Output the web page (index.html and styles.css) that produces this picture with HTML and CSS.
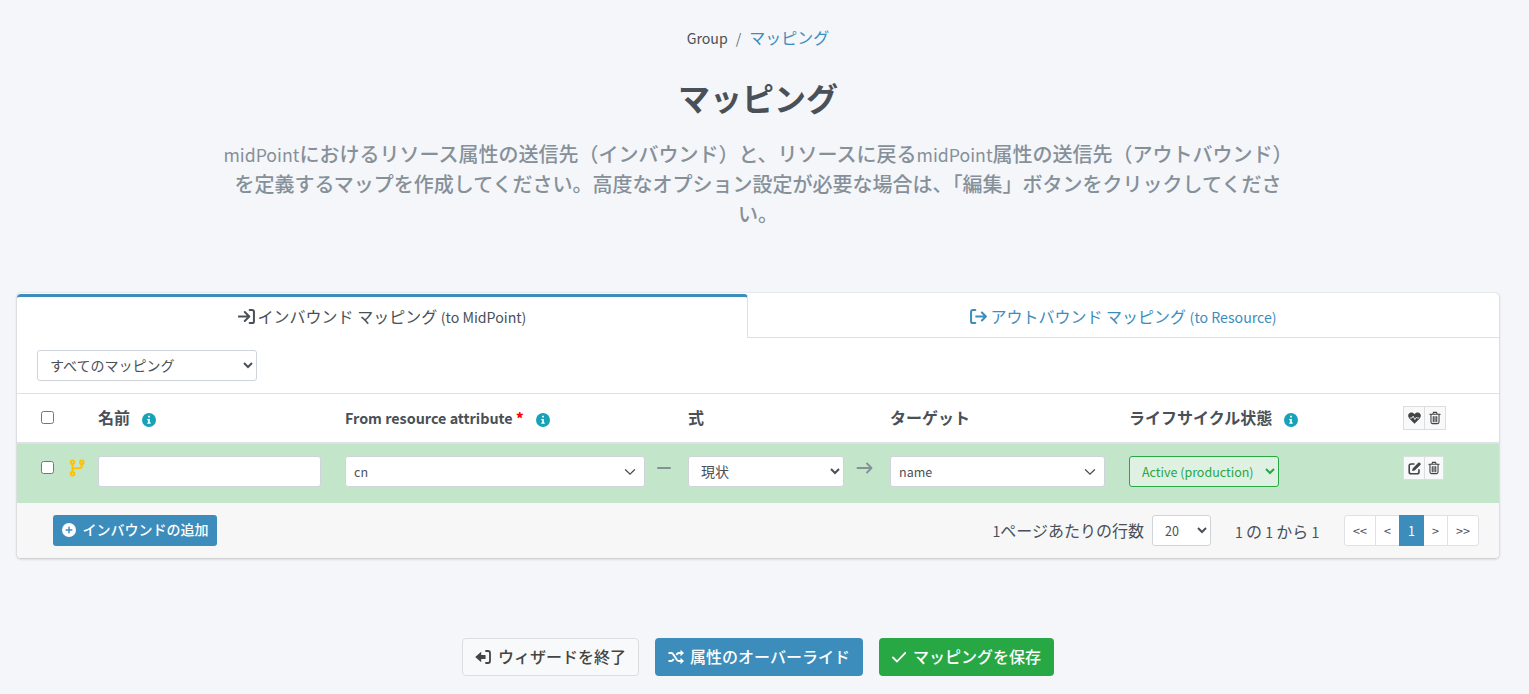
FILE: index.html
```html
<!DOCTYPE html>
<html lang="ja">
<head>
    <meta charset="utf-8">
    <title>マッピング</title>
    <link rel="stylesheet" href="styles.css">
</head>
<body>
    <!-- Icons -->
    <svg class="sprite">
        <symbol id="i-info" viewBox="0 0 16 16"><circle cx="8" cy="8" r="8" fill="currentColor"/><path d="M7 3.2h2v2H7zM6 6.8h3v4h1v1.4H6v-1.4h1V8.2H6z" fill="#fff"/></symbol>
        <symbol id="i-trash" viewBox="0 0 14 16"><path d="M1 3.7h12M4.4 3.5l.9-2h3.4l.9 2M2.3 4v8.8q0 1.8 1.7 1.8h6q1.7 0 1.7-1.8V4M5 6.3v6M7 6.3v6M9 6.3v6" fill="none" stroke="currentColor" stroke-width="1.3" stroke-linecap="round"/></symbol>
        <symbol id="i-down" viewBox="0 0 12 12"><path d="M1.5 3.7L6 8.2l4.500-4.500" fill="none" stroke="currentColor" stroke-width="1.3" stroke-linecap="round"/></symbol>
    </svg>

    <div class="breadcrumb"><span class="en">Group</span><span class="en slash">/</span><a>マッピング</a></div>
    <h1>マッピング</h1>
    <p class="description"><span class="en">midPoint</span>におけるリソース属性の送信先（インバウンド）と、リソースに戻る<span class="en">midPoint</span>属性の送信先（アウトバウンド）<br>を定義するマップを作成してください。高度なオプション設定が必要な場合は、「編集」ボタンをクリックしてくださ<br>い。</p>

    <div class="card">
        <div class="tabs">
            <div class="tab active">
                <svg class="tab-icon" viewBox="0 0 16 16"><path d="M.8 8h9.400M6.400 3.800L10.600 8l-4.200 4.200M11 1.800h2.200q1.800 0 1.800 1.800v8.800q0 1.800-1.800 1.800H11" fill="none" stroke="currentColor" stroke-width="1.900" stroke-linecap="round" stroke-linejoin="round"/></svg>
                <span>インバウンド マッピング <span class="en">(to MidPoint)</span></span>
            </div>
            <div class="tab">
                <svg class="tab-icon" viewBox="0 0 16 16"><path d="M5.800 8h9.200M11.200 4.200L15 8l-3.800 3.800M5 1.800H2.800Q1 1.800 1 3.600v8.800q0 1.800 1.800 1.800H5" fill="none" stroke="currentColor" stroke-width="1.900" stroke-linecap="round" stroke-linejoin="round"/></svg>
                <span>アウトバウンド マッピング <span class="en">(to Resource)</span></span>
            </div>
        </div>

        <div class="filter">
            <select class="control filter-select"><option>すべてのマッピング</option></select>
        </div>

        <table>
            <colgroup>
                <col class="c-check"><col class="c-icon"><col class="c-name"><col class="c-from"><col class="c-dash"><col class="c-expr"><col class="c-arrow"><col class="c-target"><col class="c-life"><col class="c-actions">
            </colgroup>
            <thead>
                <tr>
                    <th class="check"><input type="checkbox"></th>
                    <th></th>
                    <th>名前<svg class="info"><use href="#i-info"/></svg></th>
                    <th><span class="en">From resource attribute <b class="required">*</b></span><svg class="info"><use href="#i-info"/></svg></th>
                    <th></th>
                    <th>式</th>
                    <th></th>
                    <th>ターゲット</th>
                    <th>ライフサイクル状態<svg class="info"><use href="#i-info"/></svg></th>
                    <th class="actions-head">
                        <div class="actions">
                            <button class="first"><svg width="13" height="12" viewBox="0 0 16 14"><path d="M8 14L1.500 7.500C-.8 5 .2 1.500 2.600.6 4.800-.2 6.700.6 8 2.300 9.300.6 11.200-.2 13.400.6c2.400.9 3.400 4.400 1.100 6.900z" fill="currentColor"/><path d="M2 7h3l1.300-2.400 2.200 4.400L10.300 6l.8 1H14" fill="none" stroke="#f8f9fa" stroke-width="1"/></svg></button>
                            <button><svg width="12" height="14"><use href="#i-trash"/></svg></button>
                        </div>
                    </th>
                </tr>
            </thead>
            <tbody>
                <tr>
                    <td class="check"><input type="checkbox"></td>
                    <td class="icon-cell"><svg class="branch" viewBox="0 0 16 18"><g fill="none" stroke="currentColor" stroke-width="2"><circle cx="3.500" cy="3.300" r="1.800"/><circle cx="12.800" cy="3.300" r="1.800"/><circle cx="3.500" cy="14.700" r="1.800"/><path d="M3.500 5v8M12.800 5v1.500q0 2.700-2.700 2.700H3.500"/></g></svg></td>
                    <td><input type="text" class="control"></td>
                    <td><div class="control combo"><span>cn</span><svg width="12" height="12"><use href="#i-down"/></svg></div></td>
                    <td class="link"><svg width="14" height="16" viewBox="0 0 14 16"><path d="M1 8h12" stroke="currentColor" stroke-width="2" stroke-linecap="round"/></svg></td>
                    <td><select class="control"><option>現状</option></select></td>
                    <td class="link"><svg width="17" height="16" viewBox="0 0 17 16"><path d="M1.500 8h14M11 3.500L15.500 8 11 12.500" fill="none" stroke="currentColor" stroke-width="1.900" stroke-linecap="round" stroke-linejoin="round"/></svg></td>
                    <td><div class="control combo"><span>name</span><svg width="12" height="12"><use href="#i-down"/></svg></div></td>
                    <td><select class="control small lifecycle"><option>Active (production)</option></select></td>
                    <td>
                        <div class="actions row-actions">
                            <button class="first"><svg width="13" height="13" viewBox="0 0 16 16"><path d="M8 2.500H3.800Q1.500 2.500 1.500 4.800v7.400q0 2.300 2.300 2.300h7.400q2.300 0 2.300-2.300V9" fill="none" stroke="currentColor" stroke-width="2"/><path d="M5 11.200l.7-3.300L12.600 1q1-1 2 0l.6.6q1 1 0 2L8.300 10.500z" fill="currentColor"/></svg></button>
                            <button><svg width="12" height="14"><use href="#i-trash"/></svg></button>
                        </div>
                    </td>
                </tr>
            </tbody>
        </table>

        <div class="card-footer">
            <button class="btn btn-primary add">
                <svg width="14" height="14" viewBox="0 0 16 16"><circle cx="8" cy="8" r="8" fill="#fff"/><path d="M8 4.800v6.400M4.800 8h6.400" stroke="#3c8dbc" stroke-width="1.700" stroke-linecap="round"/></svg>
                <span>インバウンドの追加</span>
            </button>
            <div class="paging">
                <label><span class="en">1</span>ページあたりの行数</label>
                <select class="control small page-size"><option>20</option></select>
                <span class="count"><span class="en">1 </span>の<span class="en"> 1 </span>から<span class="en"> 1</span></span>
                <ul class="pagination">
                    <li class="wide">&lt;&lt;</li>
                    <li>&lt;</li>
                    <li class="current">1</li>
                    <li>&gt;</li>
                    <li class="wide">&gt;&gt;</li>
                </ul>
            </div>
        </div>
    </div>

    <div class="buttons">
        <button class="btn btn-default">
            <svg width="16" height="16" viewBox="0 0 16 16"><path d="M.2 8l6-5.300V6H10q.6 0 .6.600v2.800q0 .6-.6.600H6.200v3.300z" fill="currentColor"/><path d="M11 2h2q2 0 2 2v8q0 2-2 2h-2" fill="none" stroke="currentColor" stroke-width="1.800" stroke-linecap="round"/></svg>
            <span>ウィザードを終了</span>
        </button>
        <button class="btn btn-primary override">
            <svg width="16" height="16" viewBox="0 0 16 16"><path d="M.5 4H3q1.300 0 2 1l4 6q.8 1 2 1h2.500M.5 12H3q1.300 0 2-1l.7-1M8.300 6L9 5q.8-1 2-1h2.500" fill="none" stroke="currentColor" stroke-width="1.900"/><path d="M12.500.8L16 4l-3.500 3.200zM12.500 8.800L16 12l-3.500 3.200z" fill="currentColor"/></svg>
            <span>属性のオーバーライド</span>
        </button>
        <button class="btn btn-success">
            <svg width="14" height="16" viewBox="1 0 14 16"><path d="M2 8.500l4 4 8.300-8.700" fill="none" stroke="currentColor" stroke-width="1.800" stroke-linecap="round" stroke-linejoin="round"/></svg>
            <span>マッピングを保存</span>
        </button>
    </div>
</body>
</html>
```

FILE: styles.css
```css
* {
    box-sizing: border-box;
}

body {
    margin: 0;
    padding: 25px 30px 0 17px;
    background-color: #f4f6f9;
    color: #495057;
    font-family: "Noto Sans CJK JP", sans-serif;
    font-size: 16px;
    font-weight: 500;
    line-height: 24px;
    overflow: hidden;
}

button, select, input {
    font-family: inherit;
    color: inherit;
}

.sprite {
    display: none;
}

/* latin text is set smaller than the kana */
.en {
    font-size: .885em;
    font-weight: 400;
}

.breadcrumb {
    text-align: center;
    height: 24px;
    font-weight: 400;
}

.breadcrumb a {
    color: #3c8dbc;
}

.slash {
    margin: 0 8px;
    color: #6c757d;
}

h1 {
    margin: 28px 0 0;
    height: 40px;
    line-height: 40px;
    font-size: 32px;
    font-weight: 700;
    text-align: center;
}

.description {
    margin: 22px 0 64px;
    height: 90px;
    font-size: 20px;
    line-height: 30px;
    text-align: center;
    color: #869099;
    white-space: nowrap;
}

.card {
    height: 265px;
    background-color: #fff;
    border-radius: 4px;
    box-shadow: 0 0 1px rgba(0, 0, 0, .25), 0 1px 3px rgba(0, 0, 0, .2);
    overflow: hidden;
}

.tabs {
    display: flex;
    height: 45px;
    font-weight: 400;
}

.tab {
    flex: 1;
    display: flex;
    align-items: center;
    justify-content: center;
    gap: 3px;
    color: #3c8dbc;
    border-bottom: 1px solid #dee2e6;
    padding-top: 3px;
}

.tab.active {
    flex: 0 0 731px;
    color: #495057;
    border-top: 3px solid #3c8dbc;
    border-right: 1px solid #dee2e6;
    border-bottom: none;
    border-radius: 4px 4px 0 0;
    margin-top: 1px;
    padding: 0 0 2px;
}

.tab-icon {
    width: 17px;
    height: 17px;
}

.filter {
    height: 55px;
    padding: 12px 20px;
}

.control {
    display: block;
    width: 100%;
    height: 31px;
    border: 1px solid #ced4da;
    border-radius: 3px;
    background-color: #fff;
    font-size: 14px;
    padding: 0 8px 2px;
}

.filter-select {
    width: 220px;
}

.small {
    font-size: 12.5px;
    padding-bottom: 0;
}

.combo {
    display: flex;
    align-items: center;
    justify-content: space-between;
    font-size: 12.5px;
    font-weight: 400;
    padding-bottom: 0;
}

/* Mapping table */
table {
    width: 100%;
    table-layout: fixed;
    border-collapse: separate;
    border-spacing: 0;
}

.c-check { width: 43px; }
.c-icon { width: 26px; }
.c-name { width: 247px; }
.c-from { width: 324px; }
.c-dash { width: 19px; }
.c-expr { width: 180px; }
.c-arrow { width: 22px; }
.c-target { width: 239px; }
.c-life { width: 274px; }

th {
    height: 51px;
    padding: 0 12px 2px;
    border-top: 1px solid #dee2e6;
    border-bottom: 2px solid #dee2e6;
    text-align: left;
    font-weight: 700;
    white-space: nowrap;
}

th .en {
    font-size: .897em;
    font-weight: 700;
}

.actions-head {
    padding-bottom: 0;
}

.required {
    color: red;
}

.info {
    width: 14px;
    height: 14px;
    margin-left: 12px;
    color: #17a2b8;
    vertical-align: -3px;
}

td {
    height: 59px;
    padding: 12px 12px 0;
    vertical-align: top;
    background-color: #c3e6cb;
}

.check {
    padding-left: 24px;
    padding-right: 0;
}

.check input {
    display: block;
    width: 13px;
    height: 13px;
    margin: 0;
}

td.check {
    padding-top: 17px;
}

.icon-cell {
    padding: 15px 0 0 9px;
}

.branch {
    display: block;
    width: 16px;
    height: 18px;
    color: #ffc107;
}

.link {
    padding: 16px 0 0;
    color: #869099;
}

.link svg {
    display: block;
}

.lifecycle {
    width: 150px;
    color: #28a745;
    border-color: #28a745;
    background-color: #dff1e3;
}

.actions {
    display: flex;
}

.actions button {
    display: flex;
    align-items: center;
    justify-content: center;
    width: 21px;
    height: 24px;
    padding: 0;
    border: 1px solid #ddd;
    border-left: none;
    background-color: #f8f9fa;
    color: #444;
}

.actions svg {
    flex-shrink: 0;
}

.actions .first {
    width: 22px;
    border-left: 1px solid #ddd;
}

.row-actions button {
    width: 19px;
}

/* Table footer */
.card-footer {
    display: flex;
    justify-content: space-between;
    height: 55px;
    padding: 12px 20px 0 36px;
    background-color: #f7f7f7;
}

.btn {
    display: flex;
    align-items: center;
    justify-content: center;
    gap: 7px;
    height: 38px;
    padding: 0 12px 2px;
    border: 1px solid transparent;
    border-radius: 4px;
    font-size: 16px;
    font-weight: 500;
    white-space: nowrap;
}

.btn svg {
    flex-shrink: 0;
    margin-top: 1px;
}

.btn-primary {
    background-color: #3c8dbc;
    color: #fff;
}

.btn-success {
    background-color: #28a745;
    color: #fff;
}

.btn-default {
    background-color: #f8f9fa;
    border-color: #ddd;
    color: #444;
}

.override {
    gap: 6px;
}

.add {
    width: 164px;
    height: 31px;
    padding: 0 8px 3px;
    font-size: 14px;
    border-radius: 3px;
}

.paging {
    display: flex;
    font-weight: 400;
    line-height: 31px;
}

.page-size {
    width: 59px;
    margin: 0 24px 0 8px;
}

.count {
    width: 109px;
    padding-top: 1px;
}

.pagination {
    display: flex;
    margin: 0;
    padding: 0;
    list-style: none;
    height: 31px;
    border: 1px solid #dee2e6;
    border-radius: 3px;
    background-color: #fff;
    font-size: 12.5px;
    line-height: 29px;
    text-align: center;
}

.pagination li {
    width: 24px;
    border-left: 1px solid #dee2e6;
}

.pagination .wide {
    width: 31px;
}

.pagination li:first-child {
    width: 30px;
    border-left: none;
}

.pagination .current {
    width: 25px;
    height: 31px;
    margin-top: -1px;
    line-height: 31px;
    border: none;
    background-color: #3c8dbc;
    color: #fff;
}

.pagination .current + li {
    width: 23px;
    border-left: none;
}

/* Wizard buttons */
.buttons {
    display: flex;
    justify-content: center;
    gap: 16px;
    margin-top: 80px;
}
```
